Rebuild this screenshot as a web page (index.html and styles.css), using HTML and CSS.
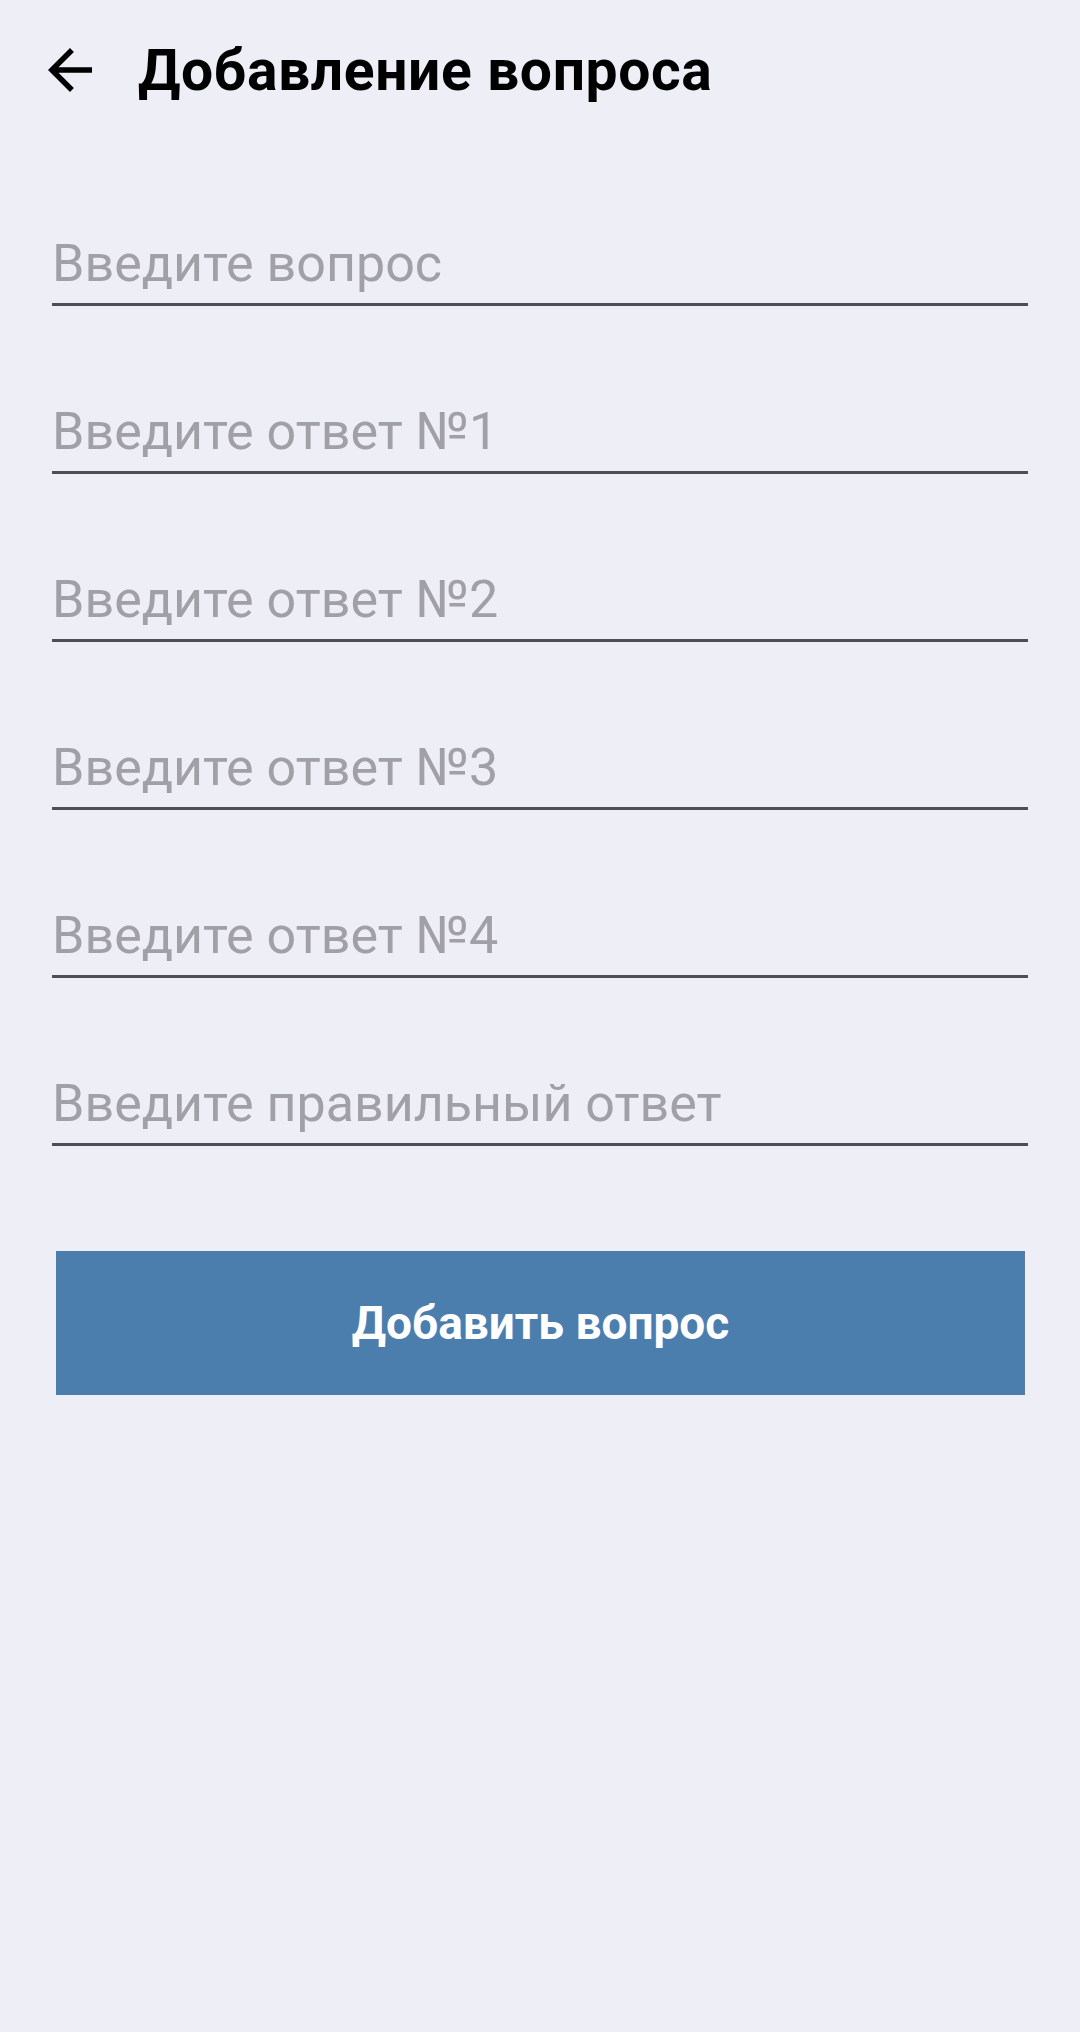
FILE: index.html
```html
<!DOCTYPE html>
<html lang="ru">
<head>
<meta charset="utf-8">
<title>Добавление вопроса</title>
<link rel="stylesheet" href="styles.css">
</head>
<body>
<div class="screen">
  <header class="toolbar">
    <button class="back" aria-label="Назад">
      <svg viewBox="0 0 24 24" width="66" height="66"><path d="M20 11H7.83l5.59-5.59L12 4l-8 8 8 8 1.41-1.41L7.83 13H20v-2z" fill="#000"/></svg>
    </button>
    <h1 class="title">Добавление вопроса</h1>
  </header>
  <main class="form">
    <div class="field"><span class="hint">Введите вопрос</span></div>
    <div class="field"><span class="hint">Введите ответ №1</span></div>
    <div class="field"><span class="hint">Введите ответ №2</span></div>
    <div class="field"><span class="hint">Введите ответ №3</span></div>
    <div class="field"><span class="hint">Введите ответ №4</span></div>
    <div class="field"><span class="hint">Введите правильный ответ</span></div>
    <button class="submit">Добавить вопрос</button>
  </main>
</div>
</body>
</html>
```

FILE: styles.css
```css
html, body {
  margin: 0;
  padding: 0;
  background: #edeef6;
}
body {
  font-family: Roboto, "Noto Sans", "Liberation Sans", sans-serif;
  width: 1080px;
  height: 2032px;
}
.screen {
  display: flex;
  flex-direction: column;
}
.toolbar {
  height: 140px;
  display: flex;
  align-items: center;
  padding-left: 37px;
  gap: 35px;
}
.back {
  width: 66px;
  height: 66px;
  padding: 0;
  border: 0;
  background: none;
  display: flex;
}
.title {
  margin: 0;
  font-size: 57px;
  font-weight: 700;
  letter-spacing: 0.6px;
  color: #000;
  line-height: 1;
}
.form {
  display: flex;
  flex-direction: column;
  padding: 94px 52px 0;
  gap: 96px;
}
.field {
  font-size: 52px;
  line-height: 60px;
  height: 60px;
  padding-bottom: 9px;
  border-bottom: 3px solid #4e4e58;
  white-space: nowrap;
}
.hint {
  color: #a0a0a6;
}
.submit {
  margin: 9px 3px 0 4px;
  height: 144px;
  border: 0;
  background: #4b7ead;
  color: #fff;
  font-family: Roboto, "Noto Sans", "Liberation Sans", sans-serif;
  font-size: 46px;
  font-weight: 700;
  padding: 0;
}
```
